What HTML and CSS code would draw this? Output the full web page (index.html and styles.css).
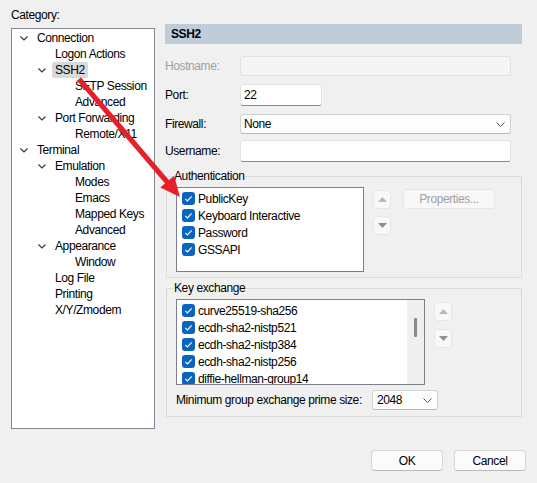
FILE: index.html
```html
<!DOCTYPE html>
<html>
<head>
<meta charset="utf-8">
<link rel="stylesheet" href="styles.css">
</head>
<body>
<div class="dialog">
  <div class="main">
    <div class="left">
      <div class="cat-label">Category:</div>
      <div class="tree">
        <div class="row l0"><span class="chev"><svg width="8" height="5" viewBox="0 0 8 5"><path d="M0.5 0.5 L4 4 L7.5 0.5" fill="none" stroke="#333" stroke-width="1.1"/></svg></span><span class="lbl">Connection</span></div>
        <div class="row l1"><span class="chev"></span><span class="lbl">Logon Actions</span></div>
        <div class="row l1"><span class="chev"><svg width="8" height="5" viewBox="0 0 8 5"><path d="M0.5 0.5 L4 4 L7.5 0.5" fill="none" stroke="#333" stroke-width="1.1"/></svg></span><span class="lbl sel">SSH2</span></div>
        <div class="row l2"><span class="chev"></span><span class="lbl">SFTP Session</span></div>
        <div class="row l2"><span class="chev"></span><span class="lbl">Advanced</span></div>
        <div class="row l1"><span class="chev"><svg width="8" height="5" viewBox="0 0 8 5"><path d="M0.5 0.5 L4 4 L7.5 0.5" fill="none" stroke="#333" stroke-width="1.1"/></svg></span><span class="lbl">Port Forwarding</span></div>
        <div class="row l2"><span class="chev"></span><span class="lbl">Remote/X11</span></div>
        <div class="row l0"><span class="chev"><svg width="8" height="5" viewBox="0 0 8 5"><path d="M0.5 0.5 L4 4 L7.5 0.5" fill="none" stroke="#333" stroke-width="1.1"/></svg></span><span class="lbl">Terminal</span></div>
        <div class="row l1"><span class="chev"><svg width="8" height="5" viewBox="0 0 8 5"><path d="M0.5 0.5 L4 4 L7.5 0.5" fill="none" stroke="#333" stroke-width="1.1"/></svg></span><span class="lbl">Emulation</span></div>
        <div class="row l2"><span class="chev"></span><span class="lbl">Modes</span></div>
        <div class="row l2"><span class="chev"></span><span class="lbl">Emacs</span></div>
        <div class="row l2"><span class="chev"></span><span class="lbl">Mapped Keys</span></div>
        <div class="row l2"><span class="chev"></span><span class="lbl">Advanced</span></div>
        <div class="row l1"><span class="chev"><svg width="8" height="5" viewBox="0 0 8 5"><path d="M0.5 0.5 L4 4 L7.5 0.5" fill="none" stroke="#333" stroke-width="1.1"/></svg></span><span class="lbl">Appearance</span></div>
        <div class="row l2"><span class="chev"></span><span class="lbl">Window</span></div>
        <div class="row l1"><span class="chev"></span><span class="lbl">Log File</span></div>
        <div class="row l1"><span class="chev"></span><span class="lbl">Printing</span></div>
        <div class="row l1"><span class="chev"></span><span class="lbl">X/Y/Zmodem</span></div>
      </div>
    </div>

    <div class="right">
      <div class="header">SSH2</div>

      <div class="frow r-host">
        <span class="flabel disabled">Hostname:</span>
        <div class="field wide disabled-field"></div>
      </div>
      <div class="frow r-port">
        <span class="flabel">Port:</span>
        <div class="field port">22</div>
      </div>
      <div class="frow r-fw">
        <span class="flabel">Firewall:</span>
        <div class="field wide select">None<svg class="dd" width="9" height="5" viewBox="0 0 9 5"><path d="M0.5 0.5 L4.5 4.5 L8.5 0.5" fill="none" stroke="#555" stroke-width="1"/></svg></div>
      </div>
      <div class="frow r-user">
        <span class="flabel">Username:</span>
        <div class="field wide"></div>
      </div>

      <fieldset class="grp auth">
        <legend>Authentication</legend>
        <div class="grp-body">
          <div class="list auth-list">
            <div class="items">
              <div class="item"><span class="cb"><svg width="13" height="13" viewBox="0 0 13 13"><path d="M3.3 6.8 L5.4 8.9 L9.7 4.4" fill="none" stroke="#fff" stroke-width="1.1"/></svg></span>PublicKey</div>
              <div class="item"><span class="cb"><svg width="13" height="13" viewBox="0 0 13 13"><path d="M3.3 6.8 L5.4 8.9 L9.7 4.4" fill="none" stroke="#fff" stroke-width="1.1"/></svg></span>Keyboard Interactive</div>
              <div class="item"><span class="cb"><svg width="13" height="13" viewBox="0 0 13 13"><path d="M3.3 6.8 L5.4 8.9 L9.7 4.4" fill="none" stroke="#fff" stroke-width="1.1"/></svg></span>Password</div>
              <div class="item"><span class="cb"><svg width="13" height="13" viewBox="0 0 13 13"><path d="M3.3 6.8 L5.4 8.9 L9.7 4.4" fill="none" stroke="#fff" stroke-width="1.1"/></svg></span>GSSAPI</div>
            </div>
          </div>
          <div class="updown auth-ud">
            <div class="ibtn"><svg width="9" height="5" viewBox="0 0 9 5"><path d="M0 5 L4.5 0 L9 5 Z" fill="#b8b8b8"/></svg></div>
            <div class="ibtn"><svg width="9" height="5" viewBox="0 0 9 5"><path d="M0 0 L4.5 5 L9 0 Z" fill="#8e8e8e"/></svg></div>
          </div>
          <div class="btn props">Properties...</div>
        </div>
      </fieldset>

      <fieldset class="grp kex">
        <legend>Key exchange</legend>
        <div class="grp-body">
          <div class="list kex-list">
            <div class="items">
              <div class="item"><span class="cb"><svg width="13" height="13" viewBox="0 0 13 13"><path d="M3.3 6.8 L5.4 8.9 L9.7 4.4" fill="none" stroke="#fff" stroke-width="1.1"/></svg></span>curve25519-sha256</div>
              <div class="item"><span class="cb"><svg width="13" height="13" viewBox="0 0 13 13"><path d="M3.3 6.8 L5.4 8.9 L9.7 4.4" fill="none" stroke="#fff" stroke-width="1.1"/></svg></span>ecdh-sha2-nistp521</div>
              <div class="item"><span class="cb"><svg width="13" height="13" viewBox="0 0 13 13"><path d="M3.3 6.8 L5.4 8.9 L9.7 4.4" fill="none" stroke="#fff" stroke-width="1.1"/></svg></span>ecdh-sha2-nistp384</div>
              <div class="item"><span class="cb"><svg width="13" height="13" viewBox="0 0 13 13"><path d="M3.3 6.8 L5.4 8.9 L9.7 4.4" fill="none" stroke="#fff" stroke-width="1.1"/></svg></span>ecdh-sha2-nistp256</div>
              <div class="item"><span class="cb"><svg width="13" height="13" viewBox="0 0 13 13"><path d="M3.3 6.8 L5.4 8.9 L9.7 4.4" fill="none" stroke="#fff" stroke-width="1.1"/></svg></span>diffie-hellman-group14</div>
            </div>
            <div class="scroll"><div class="thumb"></div></div>
          </div>
          <div class="updown kex-ud">
            <div class="ibtn"><svg width="9" height="5" viewBox="0 0 9 5"><path d="M0 5 L4.5 0 L9 5 Z" fill="#b8b8b8"/></svg></div>
            <div class="ibtn"><svg width="9" height="5" viewBox="0 0 9 5"><path d="M0 0 L4.5 5 L9 0 Z" fill="#8e8e8e"/></svg></div>
          </div>
        </div>
        <div class="minrow">
          <span class="minlabel">Minimum group exchange prime size:</span>
          <div class="field select small">2048<svg class="dd" width="9" height="5" viewBox="0 0 9 5"><path d="M0.5 0.5 L4.5 4.5 L8.5 0.5" fill="none" stroke="#555" stroke-width="1"/></svg></div>
        </div>
      </fieldset>
    </div>
  </div>

  <div class="buttons">
    <div class="btn dlg">OK</div>
    <div class="btn dlg">Cancel</div>
  </div>
</div>

<svg class="arrow" width="537" height="483" viewBox="0 0 537 483">
  <line x1="79" y1="79" x2="168" y2="183" stroke="#e5202b" stroke-width="5"/>
  <path d="M180 197 L160.3 187.4 L174.1 175.8 Z" fill="#e5202b"/>
</svg>
</body>
</html>
```

FILE: styles.css
```css
* { box-sizing: border-box; }

body {
  margin: 0;
  width: 537px;
  height: 483px;
  overflow: hidden;
  position: relative;
  background: #f0f0f0;
  font-family: "Liberation Sans", Arial, sans-serif;
  font-size: 12px;
  letter-spacing: -0.4px;
  color: #000;
}

.dialog {
  display: flex;
  flex-direction: column;
  padding: 7px 11px 0 11px;
}

.main {
  display: flex;
  gap: 10px;
}

.left { width: 144px; }

.cat-label {
  height: 16px;
  line-height: 16px;
}

.tree {
  margin-top: 5px;
  height: 401px;
  border: 1px solid #858591;
  background: #fff;
  padding-top: 1px;
}

.row {
  height: 16px;
  display: flex;
  align-items: center;
}
.l0 { padding-left: 6px; }
.l1 { padding-left: 24px; }
.l2 { padding-left: 44px; }

.chev {
  width: 19px;
  height: 16px;
  display: flex;
  align-items: center;
  padding-left: 2px;
  padding-top: 1px;
}

.lbl {
  line-height: 16px;
  padding: 0 3px;
  margin-left: -3px;
  white-space: nowrap;
}
.lbl.sel { background: #d9d9d9; border-radius: 2px; }

.right {
  width: 357px;
  padding-top: 17px;
}

.header {
  height: 20px;
  line-height: 20px;
  background: #bfcddb;
  font-weight: bold;
  padding-left: 6px;
}

.frow {
  display: flex;
  align-items: center;
}
.flabel { width: 75px; }
.flabel.disabled { color: #a0a0a0; }

.r-host { margin-top: 12px; }
.r-port { margin-top: 8px; }
.r-fw { margin-top: 8px; }
.r-user { margin-top: 6px; }

.field {
  height: 22px;
  background: #fff;
  border: 1px solid #e3e3e3;
  border-bottom-color: #8a8a8a;
  border-radius: 3px;
  padding-left: 3px;
  display: flex;
  align-items: center;
}
.field.wide { width: 271px; }
.field.port { width: 82px; }
.r-host .field { height: 20px; }
.field.disabled-field {
  background: #f5f5f5;
  border-color: #e2e2e2;
}
.field.select {
  height: 20px;
  background: #fdfdfd;
  border: 1px solid #d2d2d2;
  border-bottom-color: #b8b8b8;
  justify-content: space-between;
  padding-right: 5px;
}
.field.select.small { width: 66px; padding-left: 4px; }
.dd { flex: none; }

.grp {
  margin: 0 0 0 1px;
  width: 356px;
  min-width: 0;
  border: 1px solid #dcdcdc;
  padding: 4px 0 5px 9px;
}
.grp legend {
  padding: 0 1px;
  margin-left: -3px;
  line-height: 14px;
}
.auth { margin-top: 7px; }
.kex { margin-top: 3px; padding-bottom: 6px; }

.grp-body {
  display: flex;
  align-items: flex-start;
}

.list {
  background: #fff;
  border: 1px solid #7e7e88;
  display: flex;
  overflow: hidden;
}
.auth-list { width: 188px; height: 85px; }
.kex-list { width: 249px; height: 86px; }

.items {
  flex: 1;
  padding-top: 2px;
  overflow: hidden;
}
.item {
  height: 17px;
  display: flex;
  align-items: center;
  padding-left: 5px;
  white-space: nowrap;
}
.cb {
  width: 13px;
  height: 13px;
  background: #0b63c0;
  border-radius: 3px;
  margin-right: 3px;
  display: flex;
  flex: none;
}

.scroll {
  width: 17px;
  background: #efefef;
  display: flex;
  justify-content: center;
  padding-top: 18px;
}
.thumb {
  width: 3px;
  height: 19px;
  background: #8a8a8a;
  border-radius: 1px;
}

.updown {
  display: flex;
  flex-direction: column;
  margin-left: 9px;
  margin-top: 3px;
}
.auth-ud { gap: 7px; }
.kex-ud { gap: 8px; }

.ibtn {
  width: 18px;
  height: 19px;
  background: #f8f8f8;
  border: 1px solid #e6e6e6;
  border-radius: 4px;
  display: flex;
  align-items: center;
  justify-content: center;
}

.btn {
  background: #fbfbfb;
  border: 1px solid #d6d6d6;
  border-bottom-color: #b9b9b9;
  border-radius: 4px;
  display: flex;
  align-items: center;
  justify-content: center;
}
.props {
  margin-left: 12px;
  margin-top: 2px;
  width: 92px;
  height: 20px;
  color: #a0a0a0;
  background: #f8f8f8;
  border-color: #e6e6e6;
}

.minrow {
  display: flex;
  align-items: center;
  margin-top: 5px;
}
.minlabel { width: 196px; }

.buttons {
  display: flex;
  justify-content: flex-end;
  gap: 11px;
  margin-top: 21px;
}
.btn.dlg {
  width: 72px;
  height: 21px;
}

.arrow {
  position: absolute;
  left: 0;
  top: 0;
  pointer-events: none;
}
```
